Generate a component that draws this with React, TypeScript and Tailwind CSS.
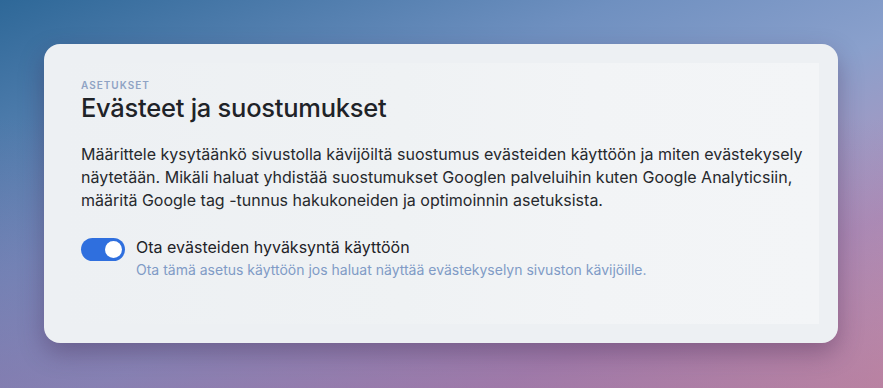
import { useState } from "react";

export default function App() {
  const [enabled, setEnabled] = useState(true);

  return (
    <main className="flex h-[388px] w-[883px] items-start bg-[linear-gradient(to_bottom,rgba(110,70,140,0)_30%,rgba(130,80,140,0.4)_100%),linear-gradient(to_bottom_right,#2e6898_0%,#6f90c0_35%,#8aa0cc_55%,#b294bc_78%,#dea3b0_100%)] px-[44px] pt-[44px] font-['Inter',sans-serif]">
      <section className="w-[794px] rounded-[16px] bg-[#edf0f3] p-[19px] shadow-[0_10px_24px_rgba(60,30,70,0.35)]">
        <div className="h-[261px] bg-[linear-gradient(to_right,#edf0f3_0%,#eff2f4_45%,#f2f4f6_70%,#f3f5f7_100%)] px-[18px] pt-[15px]">
          <p className="text-[10px] font-semibold leading-[14px] tracking-[0.1em] text-[#8fa3c4]">ASETUKSET</p>
          <h1 className="mt-[1px] text-[25.5px] font-medium leading-[30px] tracking-[-0.01em] text-[#1f2328]">
            Evästeet ja suostumukset
          </h1>
          <p className="mt-[20px] w-[730px] text-[16px] leading-[23px] text-[#26292d]">
            Määrittele kysytäänkö sivustolla kävijöiltä suostumus evästeiden käyttöön ja miten evästekysely
            näytetään. Mikäli haluat yhdistää suostumukset Googlen palveluihin kuten Google Analyticsiin,
            määritä Google tag -tunnus hakukoneiden ja optimoinnin asetuksista.
          </p>
          <div className="mt-[25px] flex items-start gap-[11px]">
            <button
              onClick={() => setEnabled(!enabled)}
              className={`mt-[1px] flex h-[23px] w-[44px] shrink-0 items-center rounded-full px-[3px] ${
                enabled ? "justify-end bg-[#2f6fde]" : "justify-start bg-[#c4ccd8]"
              }`}
            >
              <span className="h-[17px] w-[17px] rounded-full bg-white" />
            </button>
            <div>
              <p className="text-[16px] leading-[20px] text-[#1f2328]">Ota evästeiden hyväksyntä käyttöön</p>
              <p className="mt-[4px] text-[14px] leading-[18px] text-[#809bc6]">
                Ota tämä asetus käyttöön jos haluat näyttää evästekyselyn sivuston kävijöille.
              </p>
            </div>
          </div>
        </div>
      </section>
    </main>
  );
}
